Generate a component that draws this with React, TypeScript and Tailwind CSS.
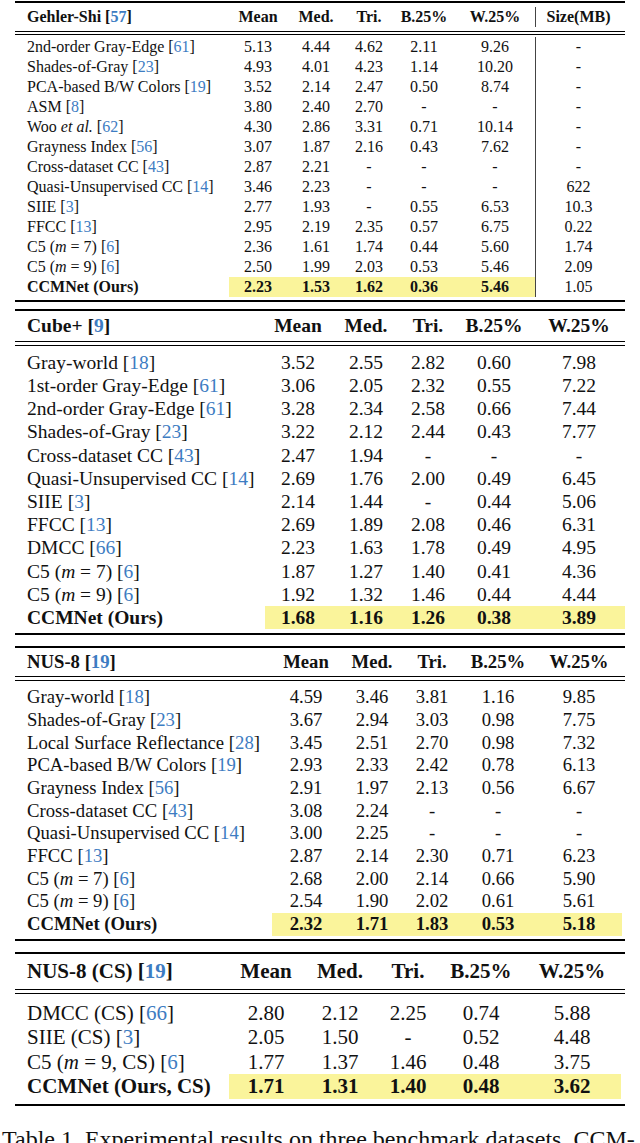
import type { ReactNode } from "react";

const Ref = ({ n }: { n: string }) => (
	<>
		[<span className="text-[#3d7cc2]">{n}</span>]
	</>
);

const C5 = ({ m, cs }: { m: string; cs?: boolean }) => (
	<>
		C5 (<i>m</i> = {m}
		{cs ? ", CS" : ""}) <Ref n="6" />
	</>
);

const HEADS = ["Mean", "Med.", "Tri.", "B.25%", "W.25%"];

type Row = { name: ReactNode; vals: string[]; size?: string; ours?: boolean };

function Head({ cols, h, title, extra }: { cols: string; h: string; title: ReactNode; extra?: ReactNode }) {
	return (
		<div className={`grid ${cols} ${h} items-center font-bold`}>
			<div className="pl-[12px] whitespace-nowrap">{title}</div>
			{HEADS.map((t) => (
				<div key={t} className="text-center whitespace-nowrap">
					{t}
				</div>
			))}
			{extra}
		</div>
	);
}

function DataRow({ cols, h, row, withSize }: { cols: string; h: string; row: Row; withSize?: boolean }) {
	return (
		<div className={`grid ${cols} ${h} items-center`}>
			<div className={`pl-[12px] whitespace-nowrap ${row.ours ? "font-bold" : ""}`}>{row.name}</div>
			{row.vals.map((v, i) => (
				<div
					key={i}
					className={`h-full flex items-center justify-center ${row.ours ? "bg-[#faf49b] font-bold" : ""}`}
				>
					{v}
				</div>
			))}
			{withSize && (
				<div className="h-full flex items-center justify-center border-l border-[#444]">{row.size}</div>
			)}
		</div>
	);
}

const gehlerRows: Row[] = [
	{ name: <>2nd-order Gray-Edge <Ref n="61" /></>, vals: ["5.13", "4.44", "4.62", "2.11", "9.26"], size: "-" },
	{ name: <>Shades-of-Gray <Ref n="23" /></>, vals: ["4.93", "4.01", "4.23", "1.14", "10.20"], size: "-" },
	{ name: <>PCA-based B/W Colors <Ref n="19" /></>, vals: ["3.52", "2.14", "2.47", "0.50", "8.74"], size: "-" },
	{ name: <>ASM <Ref n="8" /></>, vals: ["3.80", "2.40", "2.70", "-", "-"], size: "-" },
	{ name: <>Woo <i>et al.</i> <Ref n="62" /></>, vals: ["4.30", "2.86", "3.31", "0.71", "10.14"], size: "-" },
	{ name: <>Grayness Index <Ref n="56" /></>, vals: ["3.07", "1.87", "2.16", "0.43", "7.62"], size: "-" },
	{ name: <>Cross-dataset CC <Ref n="43" /></>, vals: ["2.87", "2.21", "-", "-", "-"], size: "-" },
	{ name: <>Quasi-Unsupervised CC <Ref n="14" /></>, vals: ["3.46", "2.23", "-", "-", "-"], size: "622" },
	{ name: <>SIIE <Ref n="3" /></>, vals: ["2.77", "1.93", "-", "0.55", "6.53"], size: "10.3" },
	{ name: <>FFCC <Ref n="13" /></>, vals: ["2.95", "2.19", "2.35", "0.57", "6.75"], size: "0.22" },
	{ name: <C5 m="7" />, vals: ["2.36", "1.61", "1.74", "0.44", "5.60"], size: "1.74" },
	{ name: <C5 m="9" />, vals: ["2.50", "1.99", "2.03", "0.53", "5.46"], size: "2.09" },
	{ name: "CCMNet (Ours)", vals: ["2.23", "1.53", "1.62", "0.36", "5.46"], size: "1.05", ours: true },
];

const cubeRows: Row[] = [
	{ name: <>Gray-world <Ref n="18" /></>, vals: ["3.52", "2.55", "2.82", "0.60", "7.98"] },
	{ name: <>1st-order Gray-Edge <Ref n="61" /></>, vals: ["3.06", "2.05", "2.32", "0.55", "7.22"] },
	{ name: <>2nd-order Gray-Edge <Ref n="61" /></>, vals: ["3.28", "2.34", "2.58", "0.66", "7.44"] },
	{ name: <>Shades-of-Gray <Ref n="23" /></>, vals: ["3.22", "2.12", "2.44", "0.43", "7.77"] },
	{ name: <>Cross-dataset CC <Ref n="43" /></>, vals: ["2.47", "1.94", "-", "-", "-"] },
	{ name: <>Quasi-Unsupervised CC <Ref n="14" /></>, vals: ["2.69", "1.76", "2.00", "0.49", "6.45"] },
	{ name: <>SIIE <Ref n="3" /></>, vals: ["2.14", "1.44", "-", "0.44", "5.06"] },
	{ name: <>FFCC <Ref n="13" /></>, vals: ["2.69", "1.89", "2.08", "0.46", "6.31"] },
	{ name: <>DMCC <Ref n="66" /></>, vals: ["2.23", "1.63", "1.78", "0.49", "4.95"] },
	{ name: <C5 m="7" />, vals: ["1.87", "1.27", "1.40", "0.41", "4.36"] },
	{ name: <C5 m="9" />, vals: ["1.92", "1.32", "1.46", "0.44", "4.44"] },
	{ name: "CCMNet (Ours)", vals: ["1.68", "1.16", "1.26", "0.38", "3.89"], ours: true },
];

const nusRows: Row[] = [
	{ name: <>Gray-world <Ref n="18" /></>, vals: ["4.59", "3.46", "3.81", "1.16", "9.85"] },
	{ name: <>Shades-of-Gray <Ref n="23" /></>, vals: ["3.67", "2.94", "3.03", "0.98", "7.75"] },
	{ name: <>Local Surface Reflectance <Ref n="28" /></>, vals: ["3.45", "2.51", "2.70", "0.98", "7.32"] },
	{ name: <>PCA-based B/W Colors <Ref n="19" /></>, vals: ["2.93", "2.33", "2.42", "0.78", "6.13"] },
	{ name: <>Grayness Index <Ref n="56" /></>, vals: ["2.91", "1.97", "2.13", "0.56", "6.67"] },
	{ name: <>Cross-dataset CC <Ref n="43" /></>, vals: ["3.08", "2.24", "-", "-", "-"] },
	{ name: <>Quasi-Unsupervised CC <Ref n="14" /></>, vals: ["3.00", "2.25", "-", "-", "-"] },
	{ name: <>FFCC <Ref n="13" /></>, vals: ["2.87", "2.14", "2.30", "0.71", "6.23"] },
	{ name: <C5 m="7" />, vals: ["2.68", "2.00", "2.14", "0.66", "5.90"] },
	{ name: <C5 m="9" />, vals: ["2.54", "1.90", "2.02", "0.61", "5.61"] },
	{ name: "CCMNet (Ours)", vals: ["2.32", "1.71", "1.83", "0.53", "5.18"], ours: true },
];

const csRows: Row[] = [
	{ name: <>DMCC (CS) <Ref n="66" /></>, vals: ["2.80", "2.12", "2.25", "0.74", "5.88"] },
	{ name: <>SIIE (CS) <Ref n="3" /></>, vals: ["2.05", "1.50", "-", "0.52", "4.48"] },
	{ name: <C5 m="9" cs />, vals: ["1.77", "1.37", "1.46", "0.48", "3.75"] },
	{ name: "CCMNet (Ours, CS)", vals: ["1.71", "1.31", "1.40", "0.48", "3.62"], ours: true },
];

export default function App() {
	const c1 = "grid-cols-[214px_58px_58px_48px_62px_80px_86px]";
	const c2 = "grid-cols-[250px_66px_70px_54px_78px_92px]";
	const c3 = "grid-cols-[257px_68px_64px_56px_76px_86px]";
	const c4 = "grid-cols-[214px_74px_74px_62px_84px_98px]";

	return (
		<div className="h-[1143px] w-[640px] overflow-hidden bg-white text-[#111] font-['Liberation_Serif','Times_New_Roman',serif] leading-none">
			{/* Gehler-Shi */}
			<section className="mt-[1px] ml-[15px] w-[610px] border-y-2 border-black text-[16px]">
				<Head
					cols={c1}
					h="h-[28px]"
					title={<>Gehler-Shi <Ref n="57" /></>}
					extra={<div className="flex h-[20px] items-center justify-center border-l border-[#444]">Size(MB)</div>}
				/>
				<div className="h-[4px] border-y border-black" />
				<div className="pt-[2px] pb-[3px]">
					{gehlerRows.map((r, i) => (
						<DataRow key={i} cols={c1} h="h-[20px]" row={r} withSize />
					))}
				</div>
			</section>

			{/* Cube+ */}
			<section className="mt-[7px] ml-[15px] w-[610px] border-y-2 border-black text-[19.5px]">
				<Head cols={c2} h="h-[30px]" title={<>Cube+ <Ref n="9" /></>} />
				<div className="h-[5px] border-y border-black" />
				<div className="pt-[5px] pb-[4px]">
					{cubeRows.map((r, i) => (
						<DataRow key={i} cols={c2} h="h-[23.2px]" row={r} />
					))}
				</div>
			</section>

			{/* NUS-8 */}
			<section className="mt-[11px] ml-[15px] w-[610px] border-y-2 border-black text-[18.7px]">
				<Head cols={c3} h="h-[28px]" title={<>NUS-8 <Ref n="19" /></>} />
				<div className="h-[5px] border-y border-black" />
				<div className="pt-[5px] pb-[3px]">
					{nusRows.map((r, i) => (
						<DataRow key={i} cols={c3} h="h-[22.7px]" row={r} />
					))}
				</div>
			</section>

			{/* NUS-8 (CS) */}
			<section className="mt-[11px] ml-[15px] w-[610px] border-y-2 border-black text-[21px]">
				<Head cols={c4} h="h-[35px]" title={<>NUS-8 (CS) <Ref n="19" /></>} />
				<div className="h-[5px] border-y border-black" />
				<div className="pt-[7px] pb-[5px]">
					{csRows.map((r, i) => (
						<DataRow key={i} cols={c4} h="h-[24.5px]" row={r} />
					))}
				</div>
			</section>

			<p className="mt-[19px] pl-[2px] text-[24px] leading-[28px] whitespace-nowrap">
				Table 1. Experimental results on three benchmark datasets. CCM-
			</p>
		</div>
	);
}
